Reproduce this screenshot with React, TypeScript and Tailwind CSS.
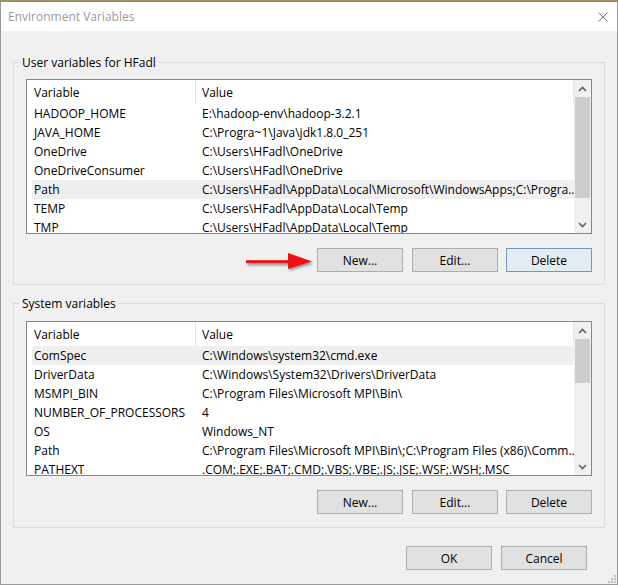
import React from "react";

type RowData = [string, string];

const userRows: RowData[] = [
  ["HADOOP_HOME", "E:\\hadoop-env\\hadoop-3.2.1"],
  ["JAVA_HOME", "C:\\Progra~1\\Java\\jdk1.8.0_251"],
  ["OneDrive", "C:\\Users\\HFadl\\OneDrive"],
  ["OneDriveConsumer", "C:\\Users\\HFadl\\OneDrive"],
  ["Path", "C:\\Users\\HFadl\\AppData\\Local\\Microsoft\\WindowsApps;C:\\Progra..."],
  ["TEMP", "C:\\Users\\HFadl\\AppData\\Local\\Temp"],
  ["TMP", "C:\\Users\\HFadl\\AppData\\Local\\Temp"],
];

const sysRows: RowData[] = [
  ["ComSpec", "C:\\Windows\\system32\\cmd.exe"],
  ["DriverData", "C:\\Windows\\System32\\Drivers\\DriverData"],
  ["MSMPI_BIN", "C:\\Program Files\\Microsoft MPI\\Bin\\"],
  ["NUMBER_OF_PROCESSORS", "4"],
  ["OS", "Windows_NT"],
  ["Path", "C:\\Program Files\\Microsoft MPI\\Bin\\;C:\\Program Files (x86)\\Comm..."],
  ["PATHEXT", ".COM;.EXE;.BAT;.CMD;.VBS;.VBE;.JS;.JSE;.WSF;.WSH;.MSC"],
];

function Chevron({ up }: { up: boolean }) {
  return (
    <svg width="9" height="6" viewBox="0 0 9 6">
      <path
        d={up ? "M1 5 L4.5 1.5 L8 5" : "M1 1 L4.5 4.5 L8 1"}
        fill="none"
        stroke="#606060"
        strokeWidth="1.6"
      />
    </svg>
  );
}

function List({
  rows,
  hl,
  small,
}: {
  rows: RowData[];
  hl: number;
  small: boolean;
}) {
  return (
    <div className="h-[155px] w-full border border-[#828790] bg-white flex overflow-hidden">
      <div className="flex-1 flex flex-col overflow-hidden">
        <div className="h-[24px] shrink-0 flex items-center border-r border-[#e5e5e5]">
          <div className="w-[169px] h-full flex items-center pl-[7px] border-r border-[#e5e5e5]">
            Variable
          </div>
          <div className="pl-[6px]">Value</div>
        </div>
        {rows.map((r, i) => (
          <div
            key={i}
            className={
              "ml-[5px] w-[542px] h-[19px] shrink-0 flex items-center whitespace-nowrap " +
              (i === hl ? "bg-[#efefef]" : "")
            }
          >
            <div className="w-[170px] shrink-0 pl-[2px]">{r[0]}</div>
            <div className="overflow-hidden">{r[1]}</div>
          </div>
        ))}
      </div>
      <div className="w-[17px] shrink-0 bg-[#f0f0f0] flex flex-col">
        <div className="h-[17px] flex items-center justify-center">
          <Chevron up={true} />
        </div>
        <div className="flex-1">
          <div
            className={
              "mx-[1px] bg-[#cdcdcd] " + (small ? "h-[44px]" : "h-[101px]")
            }
          />
        </div>
        <div className="h-[17px] flex items-center justify-center">
          <Chevron up={false} />
        </div>
      </div>
    </div>
  );
}

function Btn({
  label,
  cls,
  blue,
}: {
  label: string;
  cls?: string;
  blue?: boolean;
}) {
  return (
    <div
      className={
        "w-[86px] h-[24px] flex items-center justify-center border " +
        (blue
          ? "bg-[#e3ebf3] border-[#7397bc] "
          : "bg-[#e1e1e1] border-[#adadad] ") +
        (cls || "")
      }
    >
      {label}
    </div>
  );
}

function Arrow() {
  return (
    <svg width="68" height="24" viewBox="0 0 68 24" className="mr-[3px]">
      <defs>
        <filter id="sh" x="-20%" y="-50%" width="140%" height="200%">
          <feGaussianBlur stdDeviation="1.2" />
        </filter>
      </defs>
      <g transform="translate(1.5,2)" opacity="0.45" filter="url(#sh)">
        <rect x="0" y="12.5" width="44" height="3" fill="#333" />
        <polygon points="42,5 66,13.5 42,21" fill="#333" />
      </g>
      <rect x="0" y="12.2" width="44" height="3" fill="#ee1111" />
      <polygon points="42,5 66,13.5 42,21" fill="#ee1111" />
    </svg>
  );
}

function Grip() {
  return (
    <svg width="9" height="9" viewBox="0 0 9 9">
      <rect x="7" y="1" width="2" height="2" fill="#bcbcbc" />
      <rect x="4" y="4" width="2" height="2" fill="#bcbcbc" />
      <rect x="7" y="4" width="2" height="2" fill="#bcbcbc" />
      <rect x="1" y="7" width="2" height="2" fill="#bcbcbc" />
      <rect x="4" y="7" width="2" height="2" fill="#bcbcbc" />
      <rect x="7" y="7" width="2" height="2" fill="#bcbcbc" />
    </svg>
  );
}

export default function App() {
  return (
    <div className="w-[618px] h-[585px] flex flex-col font-['Open_Sans','Noto_Sans',sans-serif] text-[12px] leading-[17px] text-black overflow-hidden">
      <div className="h-[2px] shrink-0 bg-[#9e9064]" />
      <div className="flex-1 flex flex-col border-x border-b border-[#999999] bg-[#f0f0f0]">
        <div className="h-[29px] shrink-0 bg-white flex items-center justify-between pl-[7px] pr-[9px]">
          <span className="text-[#9a9a9a]">Environment Variables</span>
          <svg width="10" height="10" viewBox="0 0 10 10">
            <path d="M0.5 0.5 L9.5 9.5 M9.5 0.5 L0.5 9.5" stroke="#777" strokeWidth="1" />
          </svg>
        </div>
        <div className="flex-1 flex flex-col px-[12px]">
          <fieldset className="mt-[23px] border border-[#dcdcdc] px-[12px] pt-[8px] pb-[12px]">
            <legend className="ml-[-7px] px-[3px] leading-[17px]">
              User variables for HFadl
            </legend>
            <List rows={userRows} hl={4} small={false} />
            <div className="mt-[14px] flex items-center justify-end">
              <Arrow />
              <Btn label="New..." cls="mr-[9px]" />
              <Btn label="Edit..." cls="mr-[8px]" />
              <Btn label="Delete" blue={true} />
            </div>
          </fieldset>
          <fieldset className="mt-[10px] border border-[#dcdcdc] px-[12px] pt-[9px] pb-[13px]">
            <legend className="ml-[-7px] px-[3px] leading-[17px]">
              System variables
            </legend>
            <List rows={sysRows} hl={0} small={true} />
            <div className="mt-[14px] flex items-center justify-end">
              <Btn label="New..." cls="mr-[9px]" />
              <Btn label="Edit..." cls="mr-[8px]" />
              <Btn label="Delete" />
            </div>
          </fieldset>
        </div>
        <div className="h-[56px] shrink-0 flex justify-end pt-[18px] pr-[1px]">
          <Btn label="OK" cls="mr-[9px]" />
          <Btn label="Cancel" />
          <div className="self-end ml-[20px] mb-[1px]">
            <Grip />
          </div>
        </div>
      </div>
    </div>
  );
}
